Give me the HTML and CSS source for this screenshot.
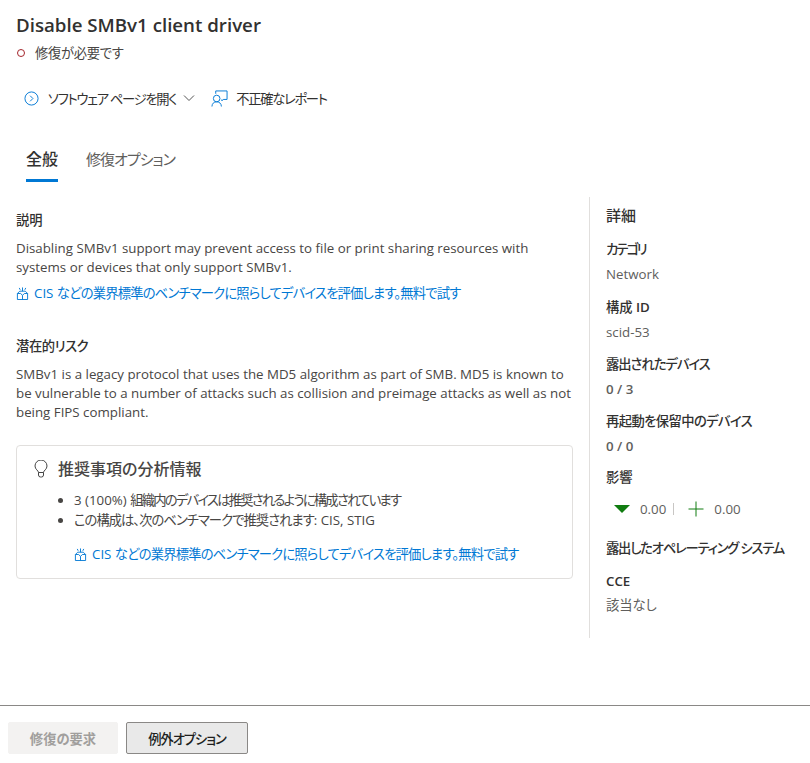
FILE: index.html
```html
<!DOCTYPE html>
<html lang="ja">
<head>
    <meta charset="UTF-8">
    <meta name="viewport" content="width=device-width, initial-scale=1.0">
    <title>Disable SMBv1 client driver</title>
    <link rel="stylesheet" href="styles.css">
</head>
<body>
    <div class="panel">
        <div class="panel-body">
            <!-- header -->
            <h1 class="title">Disable SMBv1 client driver</h1>
            <div class="status"><span class="status-dot"></span>修復が必要です</div>

            <div class="actions">
                <a class="action">
                    <svg class="icon" viewBox="0 0 16 16" fill="none" stroke="#0078d4" stroke-width="1"><circle cx="8" cy="8" r="7"/><path d="M6.500 5 9.500 8l-3 3"/></svg>
                    ソフトウェア ページを開く
                    <svg class="chevron" viewBox="0 0 12 8" fill="none" stroke="#555" stroke-width="1"><path d="M1 1.500 6 6.500l5-5"/></svg>
                </a>
                <a class="action action-report">
                    <svg class="icon-report" viewBox="0 0 18 18" fill="none" stroke="#0078d4" stroke-width="1"><path d="M5 4V1h12v9h-4l-1.500 1.500V10"/><circle cx="6" cy="9" r="3.500"/><path d="M1 17.500c0-3 2-5 5-5s5 2 5 5"/></svg>
                    不正確なレポート
                </a>
            </div>

            <div class="tabs">
                <div class="tab tab-active">全般</div>
                <div class="tab">修復オプション</div>
            </div>

            <div class="columns">
                <div class="main">
                    <h3 class="label">説明</h3>
                    <p class="text">Disabling SMBv1 support may prevent access to file or print sharing resources with systems or devices that only support SMBv1.</p>
                    <a class="promo">
                        <svg class="icon-gift" viewBox="0 0 14 14" fill="none" stroke="#0078d4" stroke-width="1"><path d="M1.500 7v6.500h11V7M1.500 7 4 4.500h6L12.500 7M1.500 7H5l2 2 2-2h3.500M7 9v4.500M7 4.500V.5M3.500 1l1 2M10.500 1l-1 2"/></svg>
                        <span><span class="latin">CIS </span>などの業界標準のベンチマークに照らしてデバイスを評価します。無料で試す</span>
                    </a>

                    <h3 class="label label-risk">潜在的リスク</h3>
                    <p class="text">SMBv1 is a legacy protocol that uses the MD5 algorithm as part of SMB. MD5 is known to be vulnerable to a number of attacks such as collision and preimage attacks as well as not being FIPS compliant.</p>

                    <div class="card">
                        <div class="card-head">
                            <svg class="icon-bulb" viewBox="0 0 14 18" fill="none" stroke="#444" stroke-width="1"><path d="M4.500 12.500C4.500 10.500 1 9.500 1 6a6 6 0 0 1 12 0c0 3.500-3.500 4.500-3.500 6.500zM4.500 12.500V15a2 2 0 0 0 2 2h1a2 2 0 0 0 2-2v-2.500"/></svg>
                            <span>推奨事項の分析情報</span>
                        </div>
                        <ul class="card-list">
                            <li class="row-org"><span class="latin">3 (100%) </span>組織内のデバイスは推奨されるように構成されています</li>
                            <li class="row-bench">この構成は、次のベンチマークで推奨されます<span class="latin">: CIS, STIG</span></li>
                        </ul>
                        <a class="promo promo-card">
                            <svg class="icon-gift" viewBox="0 0 14 14" fill="none" stroke="#0078d4" stroke-width="1"><path d="M1.500 7v6.500h11V7M1.500 7 4 4.500h6L12.500 7M1.500 7H5l2 2 2-2h3.500M7 9v4.500M7 4.500V.5M3.500 1l1 2M10.500 1l-1 2"/></svg>
                            <span><span class="latin">CIS </span>などの業界標準のベンチマークに照らしてデバイスを評価します。無料で試す</span>
                        </a>
                    </div>
                </div>

                <div class="side">
                    <h3 class="side-title">詳細</h3>
                    <div class="item item-first"><div class="item-label label-category">カテゴリ</div><div class="item-value">Network</div></div>
                    <div class="item"><div class="item-label">構成 <span class="label-latin">ID</span></div><div class="item-value">scid-53</div></div>
                    <div class="item"><div class="item-label label-exposed">露出されたデバイス</div><div class="item-value item-strong">0 / 3</div></div>
                    <div class="item"><div class="item-label label-restart">再起動を保留中のデバイス</div><div class="item-value item-strong">0 / 0</div></div>
                    <div class="item item-impact">
                        <div class="item-label">影響</div>
                        <div class="impact">
                            <span class="arrow-down"></span>
                            <span class="impact-num">0.00</span>
                            <span class="impact-sep"></span>
                            <svg class="icon-plus" viewBox="0 0 16 16" stroke="#107c10" stroke-width="1"><path d="M8 .5v15M.5 8h15"/></svg>
                            <span class="impact-num">0.00</span>
                        </div>
                    </div>
                    <div class="item item-os"><div class="item-label label-os">露出したオペレーティング システム</div></div>
                    <div class="item item-cce"><div class="item-label"><span class="label-latin">CCE</span></div><div class="item-value">該当なし</div></div>
                </div>
            </div>
        </div>

        <div class="footer">
            <button class="btn btn-disabled">修復の要求</button>
            <button class="btn btn-exception">例外オプション</button>
        </div>
    </div>
</body>
</html>
```

FILE: styles.css
```css
html, body {
    height: 100%;
}
body {
    margin: 0;
    font-family: "Open Sans", "Noto Sans CJK JP", sans-serif;
    font-size: 13.3px;
    font-feature-settings: "palt";
    color: #323130;
    background: white;
}
.panel {
    height: 763px;
    display: flex;
    flex-direction: column;
    overflow: hidden;
}
.panel-body {
    flex: 1;
    padding: 12px 0 0 16px;
}
.title {
    margin: 0;
    font-size: 18.7px;
    line-height: 26px;
    font-weight: 600;
}
.status {
    display: flex;
    align-items: center;
    margin-top: 6px;
    line-height: 18px;
    letter-spacing: -0.3px;
    color: #484644;
}
.status-dot {
    width: 6px;
    height: 6px;
    margin: 0 10px 0 1px;
    border: 1px solid #a4262c;
    border-radius: 50%;
}
.actions {
    display: flex;
    align-items: center;
    margin: 26px 0 0 8px;
    height: 20px;
}
.action {
    display: flex;
    align-items: center;
    letter-spacing: -1.3px;
    color: #323130;
}
.action-report {
    margin-left: 16px;
}
.icon {
    width: 15px;
    height: 15px;
    margin-right: 9px;
}
.chevron {
    width: 12px;
    height: 8px;
    margin-left: 7px;
}
.icon-report {
    width: 17px;
    height: 17px;
    margin-right: 8px;
}
.tabs {
    display: flex;
    gap: 28px;
    margin: 38px 0 0 10px;
}
.tab {
    font-size: 15px;
    line-height: 20px;
    padding: 3px 0 10px;
    letter-spacing: -1px;
    color: #605e5c;
}
.tab-active {
    font-size: 16px;
    letter-spacing: 0;
    color: #323130;
    font-weight: 500;
    border-bottom: 3px solid #0078d4;
}
.columns {
    display: flex;
    margin-top: 15px;
}
.main {
    width: 557px;
    padding-top: 14px;
}
.label {
    margin: 0;
    font-size: 13.3px;
    line-height: 18px;
    font-weight: 500;
}
.label-risk {
    margin-top: 35px;
    letter-spacing: -0.4px;
}
.text {
    margin: 10px -6px 0 0;
    line-height: 19px;
    color: #484644;
}
.promo {
    display: flex;
    align-items: center;
    margin-top: 7px;
    letter-spacing: -0.8px;
    color: #0078d4;
    line-height: 18px;
}
.latin {
    letter-spacing: 0;
}
.icon-gift {
    width: 13px;
    height: 13px;
    margin-right: 5px;
}
.card {
    margin-top: 23px;
    height: 134px;
    box-sizing: border-box;
    padding: 12px 16px 0 17px;
    border: 1px solid #e1dfdd;
    border-radius: 4px;
}
.card-head {
    display: flex;
    align-items: center;
    font-size: 16px;
    line-height: 22px;
    font-weight: 500;
    color: #484644;
}
.icon-bulb {
    width: 14px;
    height: 18px;
    margin-right: 10px;
}
.card-list {
    margin: 10px 0 0;
    padding-left: 40px;
    line-height: 20px;
    color: #484644;
}
.row-org {
    letter-spacing: -1.75px;
}
.row-bench {
    letter-spacing: -0.95px;
}
.promo-card {
    margin: 15px 0 0 40px;
}
.side {
    width: 221px;
    height: 441px;
    margin-left: 16px;
    padding-left: 16px;
    border-left: 1px solid #e1dfdd;
    box-sizing: border-box;
}
.side-title {
    margin: 8px 0 0;
    font-size: 15px;
    line-height: 20px;
    font-weight: 500;
}
.item {
    margin-top: 14px;
}
.item-first {
    margin-top: 15px;
    padding-bottom: 1px;
}
.item-impact {
    margin-top: 13px;
}
.item-label {
    font-weight: 500;
    line-height: 18px;
}
.label-latin {
    font-weight: 600;
}
.label-category {
    letter-spacing: -2px;
}
.label-exposed {
    letter-spacing: -1px;
}
.label-restart {
    letter-spacing: -0.6px;
}
.label-os {
    letter-spacing: -1.2px;
    white-space: nowrap;
}
.item-value {
    margin-top: 7px;
    line-height: 18px;
    color: #605e5c;
}
.item-strong {
    font-weight: 600;
}
.impact {
    display: flex;
    align-items: center;
    margin: 13px 0 0 8px;
    height: 20px;
    color: #605e5c;
}
.arrow-down {
    width: 0;
    height: 0;
    border-left: 8px solid transparent;
    border-right: 8px solid transparent;
    border-top: 8px solid #107c10;
    margin-right: 10px;
}
.impact-sep {
    width: 1px;
    height: 12px;
    margin: 0 14px 0 7px;
    background: #c8c6c4;
}
.icon-plus {
    width: 16px;
    height: 16px;
    margin-right: 10px;
}
.item-os {
    margin-top: 20px;
}
.item-cce {
    margin-top: 15px;
}
.item-cce .item-value {
    margin-top: 6px;
}
.footer {
    display: flex;
    gap: 8px;
    height: 41px;
    padding: 16px 0 0 8px;
    border-top: 1px solid #8a8886;
}
.btn {
    height: 32px;
    padding: 0 20px;
    font-family: inherit;
    font-feature-settings: inherit;
    font-size: 13.3px;
    font-weight: 500;
    color: #201f1e;
    background: #e9e9e9;
    border: 1px solid #8a8886;
    border-radius: 2px;
}
.btn-exception {
    width: 122px;
    padding: 0;
    letter-spacing: -1.1px;
}
.btn-disabled {
    width: 110px;
    font-weight: 600;
    color: #a19f9d;
    background: #f3f2f1;
    border-color: #f3f2f1;
}
```
